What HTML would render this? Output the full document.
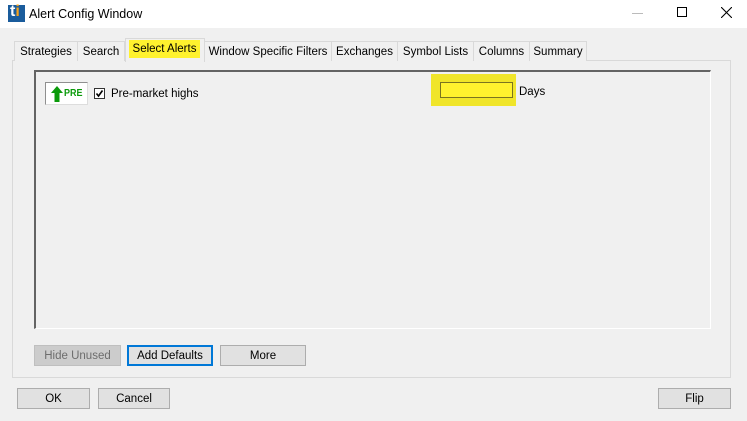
<!DOCTYPE html>
<html><head><style>
*{margin:0;padding:0;box-sizing:border-box}
body{width:747px;height:421px;background:#f0f0f0;font-family:"Liberation Sans",sans-serif;font-size:11.5px;color:#000;position:relative;overflow:hidden}
.a{position:absolute}
.title{left:0;top:0;width:747px;height:28px;background:#fff}
.tab{position:absolute;top:41px;height:20px;border:1px solid #d9d9d9;border-bottom:none;background:#f0f0f0;text-align:center;line-height:20px;font-size:11.5px}
.btn{position:absolute;height:21px;border:1px solid #adadad;background:#e1e1e1;text-align:center;line-height:20px;font-size:11.5px}
</style></head><body>
<div class="a title"></div>
<div class="a" style="left:8px;top:5px;width:17px;height:17px;background:#1a5c9c"></div>
<div class="a" style="left:10px;top:3px;color:#fff;font-weight:bold;font-size:16px;font-family:'Liberation Sans';">t<span style="color:#f7a21b">i</span></div>
<div class="a" style="left:29px;top:7px;font-size:12.5px">Alert Config Window</div>
<div class="a" style="left:632px;top:13px;width:11px;height:1px;background:#bbb"></div>
<div class="a" style="left:677px;top:7px;width:10px;height:10px;border:1px solid #000"></div>
<svg class="a" style="left:721px;top:7px" width="11" height="11"><path d="M0 0L11 11M11 0L0 11" stroke="#000" stroke-width="1.1"/></svg>

<div class="a" style="left:12px;top:60px;width:719px;height:318px;border:1px solid #d9d9d9;background:#f0f0f0"></div>
<div class="tab" style="left:14px;width:64px">Strategies</div>
<div class="tab" style="left:77px;width:48px">Search</div>
<div class="tab" style="left:204px;width:128px">Window Specific Filters</div>
<div class="tab" style="left:331px;width:67px">Exchanges</div>
<div class="tab" style="left:397px;width:77px">Symbol Lists</div>
<div class="tab" style="left:473px;width:57px">Columns</div>
<div class="tab" style="left:529px;width:58px">Summary</div>
<div class="tab" style="left:125px;width:80px;top:38px;height:24px;border-color:#d9d9d9;z-index:2"></div>
<div class="a" style="left:129px;top:40px;width:71px;height:18px;background:#fff22e;z-index:3;line-height:19px;text-align:center;font-size:11.5px">Select Alerts</div>

<div class="a" style="left:34px;top:70px;width:677px;height:259px;border:1px solid #fff;border-top:2px solid #646464;border-left:2px solid #646464"></div>

<div class="a" style="left:45px;top:82px;width:43px;height:23px;border:1px solid #8f8f8f;border-right-color:#ddd;border-bottom-color:#ddd;background:#fff"></div>
<svg class="a" style="left:51px;top:86px" width="12" height="16"><path d="M6 0L12 7H8.5V16H3.5V7H0Z" fill="#0a9a0a"/></svg>
<div class="a" style="left:64px;top:88px;color:#0a9a0a;font-weight:bold;font-size:10px;transform:scaleX(0.9);transform-origin:left">PRE</div>
<div class="a" style="left:94px;top:88px;width:11px;height:11px;border:1px solid #333;background:#fff"></div>
<svg class="a" style="left:95px;top:89px" width="9" height="9"><path d="M1.5 4.5L3.5 7L7.5 1.5" stroke="#000" stroke-width="1.6" fill="none"/></svg>
<div class="a" style="left:111px;top:88px">Pre-market highs</div>

<div class="a" style="left:431px;top:74px;width:85px;height:32px;background:#f0e52a"></div>
<div class="a" style="left:440px;top:82px;width:73px;height:16px;border:1px solid #7a7420;background:#fff22e"></div>
<div class="a" style="left:519px;top:86px">Days</div>

<div class="btn" style="left:34px;top:345px;width:87px;color:#6d6d6d;background:#ccc;border-color:#bfbfbf">Hide Unused</div>
<div class="btn" style="left:127px;top:345px;width:86px;border:2px solid #0078d7;line-height:18px">Add Defaults</div>
<div class="btn" style="left:220px;top:345px;width:86px">More</div>

<div class="btn" style="left:17px;top:388px;width:73px">OK</div>
<div class="btn" style="left:98px;top:388px;width:72px">Cancel</div>
<div class="btn" style="left:658px;top:388px;width:73px">Flip</div>
</body></html>
